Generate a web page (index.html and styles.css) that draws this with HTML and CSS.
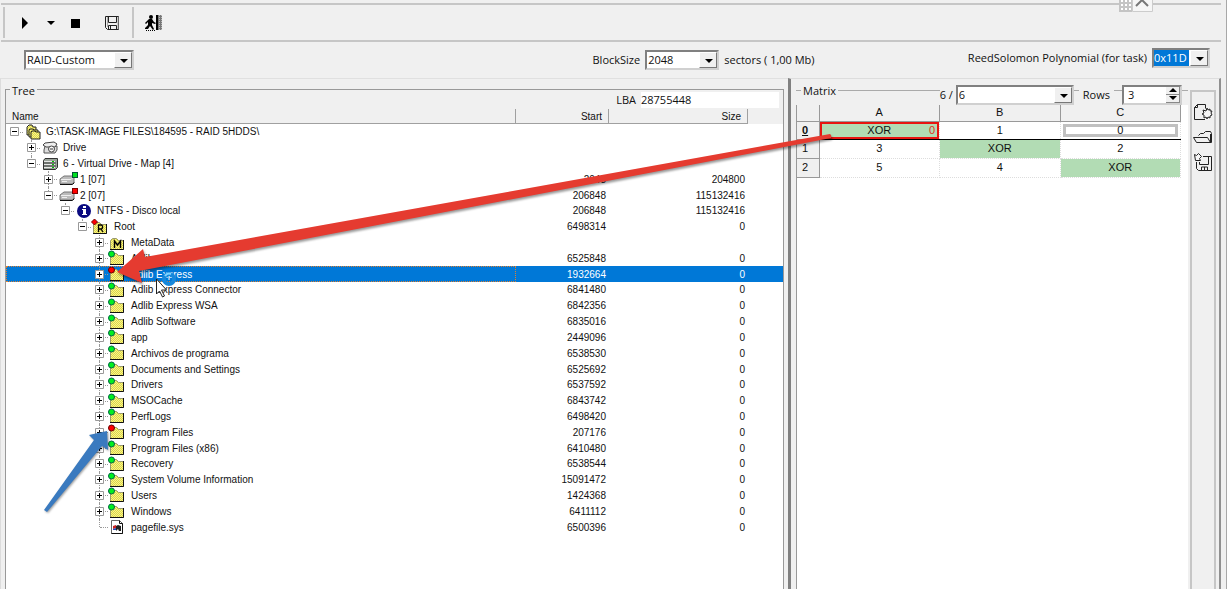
FILE: index.html
```html
<!DOCTYPE html>
<html lang="en">
<head>
    <meta charset="utf-8">
    <title>RAID-Custom</title>
    <link rel="stylesheet" href="styles.css">
</head>

<body>
    <!-- icons used more than once -->
    <svg class="defs" aria-hidden="true">
        <defs>
            <pattern id="dither" width="2" height="2" patternUnits="userSpaceOnUse">
                <rect width="2" height="2" fill="#f8f48c"/>
                <rect width="1" height="1" fill="#ddd648"/>
                <rect x="1" y="1" width="1" height="1" fill="#ddd648"/>
            </pattern>
            <symbol id="folder" viewBox="0 0 20 16">
                <path d="M2.500 14.500v-9l2-2h4l2 2h5v9z" fill="url(#dither)" stroke="#9a9a70"/>
                <path d="M2 14.500h13.500V5" fill="none" stroke="#111"/>
            </symbol>
            <symbol id="green" viewBox="0 0 20 16">
                <use href="#folder" width="20" height="16"/>
                <circle cx="3.500" cy="4" r="3" fill="#00f020" stroke="#064" stroke-width="1"/>
            </symbol>
            <symbol id="red" viewBox="0 0 20 16">
                <use href="#folder" width="20" height="16"/>
                <circle cx="3.500" cy="4" r="3" fill="#f00" stroke="#600" stroke-width="1"/>
            </symbol>
            <symbol id="root" viewBox="0 0 20 16">
                <use href="#folder" width="20" height="16"/>
                <path d="M3.500 0l3 3-3 3-3-3z" fill="#f00" stroke="#700"/>
                <path d="M7.500 13V6h3l1 1v2l-1 1h-3M10 10l2 3" fill="none" stroke="#000" stroke-width="1.300"/>
            </symbol>
            <symbol id="meta" viewBox="0 0 20 16">
                <use href="#folder" width="20" height="16"/>
                <path d="M6.500 13V6l3 4 3-4v7" fill="none" stroke="#000" stroke-width="1.400"/>
            </symbol>
            <symbol id="task" viewBox="0 0 20 16">
                <path d="M4 11V3l2-2h3l1 2h3v8z" fill="url(#dither)" stroke="#222"/>
                <path d="M6 13V6l1-1h3l1 1h4v7z" fill="url(#dither)" stroke="#222"/>
                <path d="M8 15V8l1-1h3l1 1h4v7z" fill="url(#dither)" stroke="#222"/>
            </symbol>
            <symbol id="drive" viewBox="-2 0 20 16">
                <path d="M3 6l-1 4v3h11l2-3V6z" fill="#ddd" stroke="#555"/>
                <path d="M1 5l2-2 9-1 3 2-2 3H4z" fill="#eee" stroke="#444"/>
                <circle cx="9.500" cy="9" r="3" fill="#f7f7f7" stroke="#444"/>
                <path d="M8 9h3" stroke="#333"/>
            </symbol>
            <symbol id="map" viewBox="-2 0 20 16">
                <path d="M3 2.500h12.500v9l-2 2h-12v-9z" fill="#9aa39a" stroke="#333"/>
                <path d="M2 5.500h11M2 8.500h11M2 11.500h11" stroke="#e8e8e8"/>
                <path d="M2 7h12M2 10h12" stroke="#444"/>
                <path d="M10 8.500h2M10 5.500h2M10 11.500h2" stroke="#0b0"/>
            </symbol>
            <symbol id="disk" viewBox="-2 0 20 16">
                <path d="M1 8l4-3h10v6l-2 2H1z" fill="#bbb" stroke="#777"/>
                <path d="M2 8.500h10l3-3" fill="none" stroke="#eee"/>
                <path d="M1 13.500h12.500l2-2" fill="none" stroke="#111"/>
                <path d="M3 10.500h5" stroke="#eee"/>
            </symbol>
            <symbol id="disk-green" viewBox="0 0 20 16">
                <use href="#disk" width="20" height="16"/>
                <rect x="15.500" y="1.500" width="5" height="5" fill="#00e020" stroke="#053"/>
            </symbol>
            <symbol id="disk-red" viewBox="0 0 20 16">
                <use href="#disk" width="20" height="16"/>
                <rect x="15.500" y="1.500" width="5" height="5" fill="#f00" stroke="#700"/>
            </symbol>
            <symbol id="info" viewBox="0 0 20 16">
                <circle cx="10" cy="8" r="7" fill="#0a0a80"/>
                <path d="M9 3h3v2H9zM8 6h4v5h1v1H8v-1h1V7H8z" fill="#fff"/>
            </symbol>
            <symbol id="file" viewBox="0 0 20 16">
                <path d="M3.500 1.500h8l3 3v10h-11z" fill="#fff" stroke="#666"/>
                <path d="M11.500 1.500v3h3v10h-11" fill="none" stroke="#111"/>
                <path d="M5 7l3-1v3l-3 1z" fill="#c22"/>
                <path d="M8 7l2-1 3 1v5h-2l-1-2-2 2z" fill="#222"/>
                <path d="M5 10l3-1v2H5z" fill="#24b"/>
            </symbol>
        </defs>
    </svg>

    <div class="toolbar">
        <button type="button" aria-label="Start">
            <svg width="16" height="16"><path d="M5 2v12l6-6z"/></svg>
        </button>
        <button type="button" class="narrow" aria-label="Start options">
            <svg width="10" height="16"><path d="M1 6h8L5 10z"/></svg>
        </button>
        <button type="button" aria-label="Stop">
            <svg width="16" height="16"><path d="M3 4h9v9H3z"/></svg>
        </button>
        <button type="button" class="save" aria-label="Save">
            <svg width="18" height="18" fill="none" stroke="#222"><path d="M2.500 2.500h13v13h-11l-2-2z"/><path d="M5.500 2.500v6h8v-6"/><path d="M5.500 15.500v-4h8v4M7.500 12v3"/><path d="M4.500 3v10M15 3v12" stroke="#aaa"/></svg>
        </button>
        <button type="button" class="exit" aria-label="Exit">
            <svg width="20" height="18"><circle cx="7" cy="3" r="2"/><path d="M5 5h3l2 3 2 1-1 1-3-1v2l2 4-1 1-3-4-2 3H1v-1l3-3V8L2 10 1 9z"/><path d="M12 1h2v15h-2z"/><path d="M14 1h4v15h-4z" fill="#777"/><path d="M15.500 1v15M17.500 1v15" stroke="#bbb" stroke-dasharray="1 1"/><path d="M2 16.500h9" stroke="#000" stroke-dasharray="1 1"/></svg>
        </button>
        <div class="dock" aria-hidden="true">
            <svg width="34" height="12"><path d="M0 0h13v12H0z" fill="#c4c4c4"/><path d="M2 0h2v2H2zM6 0h2v2H6zM10 0h2v2h-2zM2 4h2v2H2zM6 4h2v2H6zM10 4h2v2h-2zM2 8h2v2H2zM6 8h2v2H6zM10 8h2v2h-2z" fill="#fff"/><path d="M13.500-1h20v12.500h-20z" fill="#f6f6f6" stroke="#ccc"/><path d="M17 6l6-6 6 6" fill="none" stroke="#777" stroke-width="2"/></svg>
        </div>
    </div>

    <div class="options">
        <div>
            <span class="combo raid"><select aria-label="RAID type"><option>RAID-Custom</option></select></span>
        </div>
        <div class="group">
            <label for="block">BlockSize</label>
            <span class="combo block"><select id="block"><option>2048</option></select></span>
            <span>sectors ( 1,00 Mb)</span>
        </div>
        <div class="group poly">
            <label for="poly">ReedSolomon Polynomial (for task)</label>
            <span class="combo picked"><select id="poly"><option>0x11D</option></select></span>
        </div>
    </div>

    <main>
        <section class="left">
            <div class="tree-panel">
                <div class="tree-head">
                    <span class="title">Tree</span>
                    <label for="lba">LBA</label>
                    <input type="text" id="lba" value="28755448">
                </div>
                <div class="tree-body">
                    <table class="tree">
                        <thead>
                            <tr><th>Name</th><th>Start</th><th>Size</th></tr>
                        </thead>
                        <tbody id="rows"></tbody>
                    </table>
                </div>
            </div>
        </section>

        <section class="right">
            <div class="matrix-panel">
                <div class="matrix-head">
                    <span class="title">Matrix</span>
                    <label for="disks" class="disks">6 /</label>
                    <span class="combo count"><select id="disks"><option>6</option></select></span>
                    <label for="rowcount" class="rowcount">Rows</label>
                    <span class="spin">
                        <input type="text" id="rowcount" value="3">
                        <span class="arrows">
                            <button type="button" aria-label="More rows"><svg width="8" height="4"><path d="M0 4h8L4 0z"/></svg></button>
                            <button type="button" aria-label="Fewer rows"><svg width="8" height="4"><path d="M0 0h8L4 4z"/></svg></button>
                        </span>
                    </span>
                </div>
                <div class="matrix-body">
                    <table class="matrix">
                        <thead>
                            <tr><th class="corner"></th><th>A</th><th>B</th><th>C</th></tr>
                        </thead>
                        <tbody>
                            <tr class="current"><th>0</th><td class="xor marked">XOR<span>0</span></td><td>1</td><td class="cursor">0</td></tr>
                            <tr><th>1</th><td>3</td><td class="xor">XOR</td><td>2</td></tr>
                            <tr><th>2</th><td>5</td><td>4</td><td class="xor">XOR</td></tr>
                        </tbody>
                    </table>
                </div>
            </div>
            <div class="sidebar">
                <button type="button" aria-label="New matrix">
                    <svg width="20" height="18" fill="none" stroke="#222"><path d="M12 16.500H1.500v-12l3-3h8v4"/><path d="M4.500 1.500v3h-3"/><path d="M14 5l1 2 2-1v2h2l-1 2 1 2-2 1v2l-2-1-1 2-1-2-2 1v-3l-2-1 2-1-1-3 3 1z" fill="#f6f6f6"/></svg>
                </button>
                <button type="button" aria-label="Open matrix">
                    <svg width="20" height="18" fill="none" stroke="#222"><path d="M5.500 7.500l2-2h3l2-2h5l1 2v9h-15l-3-5h14l3 5"/><path d="M18 6v8" stroke-width="2"/></svg>
                </button>
                <button type="button" aria-label="Save matrix">
                    <svg width="20" height="18" fill="none" stroke="#222"><path d="M10 3.500h8.500v14h-13l-2-2V9"/><path d="M6.500 9v2.500h9V4M8.500 17v-3h6v3M11.500 14v3"/><path d="M1.500 1.500l2 1 2-2 3 3-2 2 1 2h-5z" fill="#f6f6f6"/></svg>
                </button>
            </div>
        </section>
    </main>

    <!-- annotations drawn over the window -->
    <svg class="marks" aria-hidden="true">
        <g class="red-arrow">
            <path d="M117 272L143 249l2 8L830 134q2 1 1 4L139 271l3 12z"/>
        </g>
        <g class="blue-arrow">
            <path d="M107 431l1 19-6-4L47 512l-3-2 50-70-5-5z"/>
        </g>
        <path d="M156.500 279v15l3-3 3 6 2-1-3-6h5z" fill="#fff" stroke="#222"/>
        <circle cx="169" cy="279" r="5" fill="none" stroke="#1688dc" stroke-width="4"/>
        <path d="M165 276a5 5 0 0 1 6-2" fill="none" stroke="#7fd4ff" stroke-width="2"/>
    </svg>

    <script>
        // level, state of the branch, icon, name, start, size
        var tree=[
            [0,"-","task","G:\\TASK-IMAGE FILES\\184595 - RAID 5HDDS\\","",""],
            [1,"+","drive","Drive","",""],
            [1,"-","map","6 - Virtual Drive - Map [4]","",""],
            [2,"+","disk-green","1 [07]","2048","204800"],
            [2,"-","disk-red","2 [07]","206848","115132416"],
            [3,"-","info","NTFS - Disco local","206848","115132416"],
            [4,"-","root","Root","6498314","0"],
            [5,"+","meta","MetaData","",""],
            [5,"+","green","Adlib","6525848","0"],
            [5,"+","red","Adlib Express","1932664","0"],
            [5,"+","green","Adlib Express Connector","6841480","0"],
            [5,"+","green","Adlib Express WSA","6842356","0"],
            [5,"+","green","Adlib Software","6835016","0"],
            [5,"+","green","app","2449096","0"],
            [5,"+","green","Archivos de programa","6538530","0"],
            [5,"+","green","Documents and Settings","6525692","0"],
            [5,"+","green","Drivers","6537592","0"],
            [5,"+","green","MSOCache","6843742","0"],
            [5,"+","green","PerfLogs","6498420","0"],
            [5,"+","red","Program Files","207176","0"],
            [5,"+","green","Program Files (x86)","6410480","0"],
            [5,"+","green","Recovery","6538544","0"],
            [5,"+","green","System Volume Information","15091472","0"],
            [5,"+","green","Users","1424368","0"],
            [5,"+","green","Windows","6411112","0"],
            [5,"","file","pagefile.sys","6500396","0"]
        ];
        var selected=9;
        var html="";

        for(let i=0;i<tree.length;i++){
            let [level,state,icon,name,start,size]=tree[i];
            let last=!tree[i+1] || tree[i+1][0]!=level;
            let box="";
            if(state){
                box='<svg class="box" width="9" height="9"><path d="M.5.5h8v8h-8z" fill="#fff" stroke="#999"/><path d="M2 4.500h5'+(state=="+" ? "M4.500 2v5" : "")+'" stroke="#000"/></svg>';
            }
            html += '<tr class="'+(i==selected ? "selected" : "")+'"><td style="padding-left:'+level*17+'px">'
                + '<span class="node'+(last ? " last" : "")+(level==0 ? " top" : "")+'">'+box+'</span>'
                + '<svg class="icon" width="20" height="16"><use href="#'+icon+'"/></svg>'
                + '<span class="name">'+name+'</span></td>'
                + '<td>'+start+'</td><td>'+size+'</td></tr>';
        }
        document.getElementById("rows").innerHTML=html;
    </script>
</body>

</html>
```
FILE: styles.css
```css
*{
    box-sizing: border-box;
}
body{
    margin: 0;
    position: relative;
    min-height: 100vh;
    display: flex;
    flex-direction: column;
    overflow: hidden;
    background-color: #f0f0f0;
    color: #111;
    font-family: "Open Sans", sans-serif;
    font-size: 11px;
    line-height: 16px;
    border-right: 1px solid #a8a8a8;
}
button, input, select{
    font: inherit;
    color: inherit;
    margin: 0;
    padding: 0;
    border: none;
    background: none;
}
symbol{
    overflow: visible;
}
.defs{
    position: absolute;
    width: 0;
    height: 0;
}

/* toolbar */
.toolbar{
    position: relative;
    display: flex;
    align-items: center;
    height: 39px;
    margin: 3px 5px 0 1px;
    padding: 0 0 0 12px;
    border-top: 2px solid #c6c6c6;
    border-bottom: 2px solid #c6c6c6;
}
.toolbar::before{
    content: "";
    position: absolute;
    left: 2px;
    top: 2px;
    bottom: 2px;
    border-left: 2px solid #c6c6c6;
}
.toolbar button{
    width: 24px;
    height: 24px;
    display: flex;
    align-items: center;
    justify-content: center;
}
.toolbar .narrow{
    width: 18px;
    margin: 0 4px 0 5px;
}
.toolbar .save{
    margin-left: 12px;
}
.toolbar .exit{
    width: 41px;
    height: 31px;
    margin-left: 8px;
    border-left: 2px solid #c6c6c6;
}
.dock{
    position: absolute;
    right: 68px;
    top: -5px;
    height: 12px;
}
.dock svg{
    display: block;
}

/* options */
.options{
    display: grid;
    grid-template-columns: 568fr 375fr auto;
    align-items: center;
    height: 36px;
    padding: 0 16px 0 24px;
}
.group{
    display: flex;
    align-items: center;
    gap: 5px;
}
.poly{
    padding-bottom: 4px;
}
.combo{
    position: relative;
    display: block;
    height: 20px;
    background-color: #fff;
    border: 2px solid;
    border-color: #808080 #d0d0d0 #d0d0d0 #808080;
}
.combo select{
    appearance: none;
    display: block;
    width: 100%;
    height: 16px;
    padding-left: 1px;
    border-radius: 0;
}
.combo::before{
    content: "";
    position: absolute;
    top: 0;
    right: 0;
    bottom: 0;
    width: 16px;
    background-color: #f0f0f0;
    border: 1px solid;
    border-color: #fff #777 #777 #fff;
    pointer-events: none;
    z-index: 1;
}
.combo::after{
    content: "";
    position: absolute;
    right: 4px;
    top: 7px;
    border: 4px solid transparent;
    border-top-color: #000;
    border-bottom: none;
    pointer-events: none;
    z-index: 1;
}
.raid{
    width: 110px;
}
.block{
    width: 74px;
}
.picked{
    width: 58px;
}
.picked select{
    width: 35px;
    padding: 0;
    color: #fff;
    background-color: #0078d7;
}

/* panels */
main{
    flex: 1;
    display: flex;
}
.left{
    flex: 1;
    display: flex;
    padding: 10px 4px 0 4px;
    border-top: 1px solid #e0e0e0;
    border-left: 1px solid #dcdcdc;
}
.right{
    flex: 0 0 433px;
    display: flex;
    padding: 5px 3px 0 5px;
    margin-right: 5px;
    border-top: 1px solid #ddd;
    border-left: 3px solid #808080;
    border-right: 2px solid #909090;
}
.title{
    padding: 0 2px;
    background-color: #f0f0f0;
}

/* tree */
.tree-panel{
    flex: 1;
    display: flex;
    flex-direction: column;
    border: 1px solid #999;
    border-bottom: none;
}
.tree-head{
    display: flex;
    height: 19px;
    padding: 2px 4px 0 4px;
}
.tree-head .title{
    height: 16px;
    margin-top: -9px;
    margin-right: auto;
}
.tree-head input{
    width: 138px;
    height: 16px;
    margin-left: 5px;
    background-color: #fff;
}
.tree-body{
    flex: 1;
    background-color: #fff;
}
.tree{
    display: block;
    font-family: "Liberation Sans", sans-serif;
    font-size: 10px;
    line-height: 15px;
}
.tree thead{
    display: block;
    background-color: #f0f0f0;
}
.tree tbody{
    display: grid;
    grid-auto-rows: minmax(0, 1fr);
    height: 411px;
}
.tree tr{
    display: grid;
    grid-template-columns: 1fr 93px 139px;
    grid-template-rows: 100%;
    padding-right: 35px;
}
.tree th{
    height: 15px;
    padding: 0 6px;
    font-weight: normal;
    text-align: right;
    border-right: 1px solid #a0a0a0;
    border-bottom: 1px solid #a0a0a0;
}
.tree th:first-child{
    text-align: left;
}
.tree td{
    min-height: 0;
    display: flex;
    align-items: center;
    justify-content: flex-end;
    padding: 0 3px 0 0;
}
.tree td:first-child{
    justify-content: flex-start;
}
.selected{
    color: #fff;
    background-color: #0078d7;
}
.selected td:first-child{
    outline: 1px dotted #e08030;
    outline-offset: -1px;
}
.node{
    position: relative;
    flex: 0 0 17px;
    height: 100%;
    display: flex;
    align-items: center;
    justify-content: center;
}
.node::before{
    content: "";
    position: absolute;
    left: 8px;
    top: 0;
    bottom: 0;
    border-left: 1px dotted #999;
}
.node.last::before{
    bottom: 50%;
}
.node.top::before{
    display: none;
}
.node::after{
    content: "";
    position: absolute;
    left: 9px;
    right: 0;
    top: 50%;
    border-top: 1px dotted #999;
}
.box{
    position: relative;
    z-index: 1;
}
.icon{
    flex: none;
    margin-right: 3px;
    overflow: visible;
}
.name{
    white-space: nowrap;
}

/* matrix */
.matrix-panel{
    flex: 1;
    display: flex;
    flex-direction: column;
    padding-right: 2px;
}
.matrix-head{
    display: flex;
    align-items: center;
    height: 21px;
    padding: 0 6px 0 5px;
    background: linear-gradient(#aaa, #aaa) 0 6px / 100% 1px no-repeat;
}
.matrix-head .title{
    margin-top: -7px;
    margin-right: auto;
}
.matrix-head label{
    background-color: #f0f0f0;
}
.disks{
    padding-right: 3px;
}
.count{
    width: 118px;
}
.rowcount{
    padding: 0 4px;
    margin: 0 8px 0 5px;
}
.spin{
    display: flex;
    width: 60px;
    height: 20px;
    background-color: #fff;
    border: 2px solid;
    border-color: #808080 #d0d0d0 #d0d0d0 #808080;
}
.spin input{
    flex: 1;
    min-width: 0;
    padding-left: 4px;
}
.arrows{
    display: flex;
    flex-direction: column;
    width: 14px;
}
.arrows button{
    flex: 1;
    display: flex;
    align-items: center;
    justify-content: center;
    background-color: #f0f0f0;
    border-right: 1px solid #888;
    border-bottom: 1px solid #888;
}
.matrix-body{
    flex: 1;
    padding-right: 7px;
    background-color: #fff;
    border-left: 1px solid #999;
}
.matrix{
    width: 100%;
    table-layout: fixed;
    border-collapse: collapse;
    font-family: "Liberation Sans", sans-serif;
    font-size: 11px;
    line-height: 15px;
    text-align: center;
}
.matrix th{
    height: 16px;
    padding: 0;
    font-weight: normal;
    background-color: #f0f0f0;
    border-right: 1px solid #999;
    border-bottom: 1px solid #999;
}
.matrix .corner{
    width: 22px;
}
.matrix td{
    position: relative;
    height: 19px;
    padding: 0;
    border-right: 1px dotted #ddd;
    border-bottom: 1px dotted #ddd;
}
.matrix tbody th{
    padding-left: 5px;
    text-align: left;
}
.matrix .current th{
    font-weight: bold;
    text-decoration: underline;
}
.matrix .current td{
    height: 18px;
    border-bottom: 1px solid #000;
}
.matrix .xor{
    background-color: #b2dcb4;
}
.matrix .marked{
    box-shadow: inset 0 0 0 2px #e81410;
}
.marked span{
    position: absolute;
    right: 4px;
    color: #e03020;
}
.matrix .cursor{
    box-shadow: inset 0 0 0 2px #fff, inset 0 0 0 5px #c0c0c0;
}
.sidebar{
    width: 26px;
    margin-top: 6px;
    padding-top: 11px;
    display: flex;
    flex-direction: column;
    align-items: center;
    gap: 7px;
    border: 2px solid #c6c6c6;
    border-bottom: none;
}
.sidebar button{
    width: 20px;
    height: 18px;
}
.sidebar svg{
    display: block;
}

/* annotations */
.marks{
    position: absolute;
    top: 0;
    left: 0;
    width: 100%;
    height: 100%;
    pointer-events: none;
    z-index: 2;
}
.red-arrow{
    fill: #e53b30;
    filter: drop-shadow(1px 2px 1px rgba(0, 0, 0, 0.4));
}
.blue-arrow{
    fill: #3a7abf;
    filter: drop-shadow(1px 1px 1px rgba(0, 0, 0, 0.4));
}
```
